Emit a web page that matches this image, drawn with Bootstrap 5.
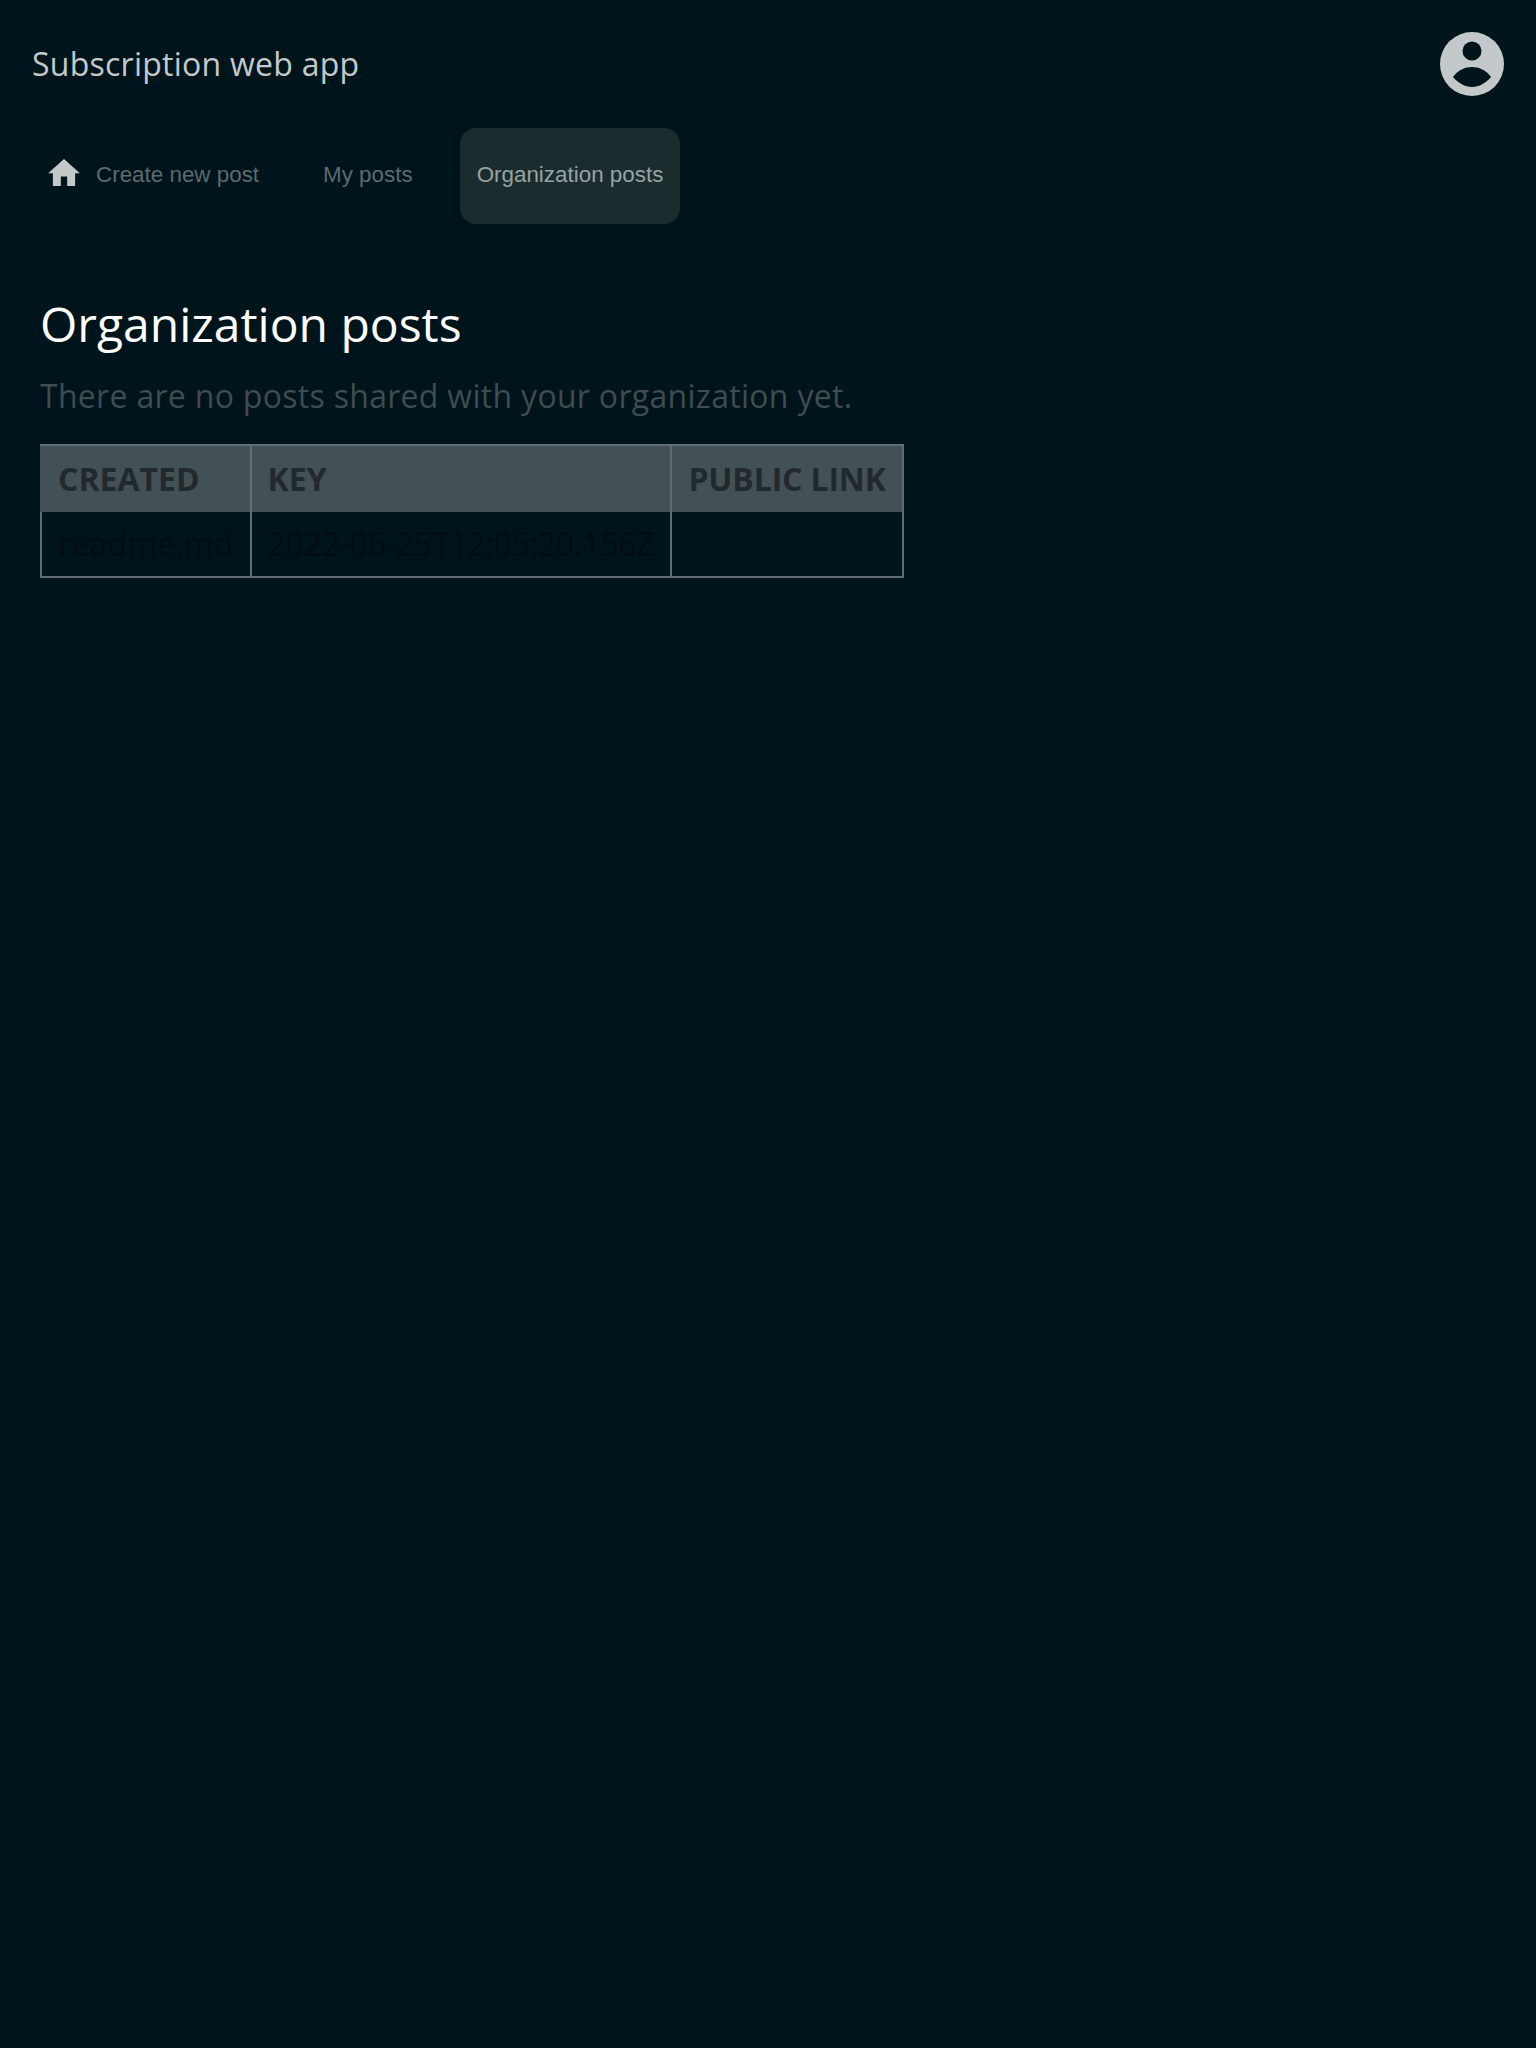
<!DOCTYPE html>
<html lang="en">
<head>
  <meta charset="UTF-8" />
  <meta name="viewport" content="width=device-width, initial-scale=1.0" />
  <title>Organization posts</title>
  <link href="https://cdn.jsdelivr.net/npm/bootstrap@5.3.3/dist/css/bootstrap.min.css" rel="stylesheet">
  <style>
    body { background: #00141b; font-family: "Open Sans", sans-serif; min-height: 2048px; }
    .app-header { height: 128px; padding: 0 32px; }
    .app-title { font-size: 32px; color: #c3c9ca; line-height: 48px; letter-spacing: .25px; }
    .app-avatar { width: 64px; height: 64px; display: block; }
    .app-nav { padding: 0 32px; gap: 32px; }
    .app-link { height: 96px; padding: 0 16px 2px; gap: 16px; border-radius: 16px; font-family: "Liberation Sans", Arial, sans-serif; font-size: 22.4px; color: #5d6a6e; text-decoration: none; }
    .app-link:hover { color: #5d6a6e; }
    .app-link.is-current { background: #1b2c2e; color: #99a3a4; margin-left: -1px; padding: 0 17px 2px; }
    .home-icon { width: 32px; height: 27px; display: block; margin-bottom: 6px; }
    .page-body { padding: 71px 40px 0; }
    .page-title { font-size: 48px; line-height: 58px; color: #fff; font-weight: 400; margin: 0 0 19px; }
    .page-note { font-size: 32px; line-height: 48px; color: #3f4c51; margin: 0 0 24px; letter-spacing: .3px; }
    .posts-table { font-size: 32px; line-height: 48px; }
    .posts-table th, .posts-table td { padding: 8px 16px; border: 2px solid #606e72; }
    .posts-table th { background: #435055; color: #22292c; font-weight: 700; text-transform: uppercase; border-bottom: 0; padding: 9px 16px; }
    .posts-table th:first-child { border-left-color: #435055; }
    .posts-table th:nth-child(3) { letter-spacing: -.15px; }
    .posts-table td { color: #020d12; border-top: 0; }
    .posts-table td:nth-child(1) { letter-spacing: .22px; }
    .posts-table td:nth-child(2) { letter-spacing: -.25px; }
  </style>
</head>
<body>
  <header class="app-header d-flex align-items-center justify-content-between">
    <div class="app-title">Subscription web app</div>
    <svg class="app-avatar" viewBox="0 0 64 64" aria-label="Account">
      <circle cx="32" cy="32" r="32" fill="#c3c9ca"/>
      <circle cx="32" cy="19" r="9.5" fill="#00141b"/>
      <path fill="#00141b" d="M13 45C18 38 25 35 32 35C39 35 46 38 51 45C46 51 39 55 32 55C25 55 18 51 13 45Z"/>
    </svg>
  </header>

  <nav class="app-nav d-flex">
    <a class="app-link d-flex align-items-center" href="#">
      <svg class="home-icon" viewBox="2 3 20 17"><path fill="#c3c9ca" d="M10 20v-6h4v6h5v-8h3L12 3 2 12h3v8z"/></svg>
      Create new post
    </a>
    <a class="app-link d-flex align-items-center" href="#">My posts</a>
    <a class="app-link is-current d-flex align-items-center" href="#">Organization posts</a>
  </nav>

  <main class="page-body">
    <h1 class="page-title">Organization posts</h1>
    <p class="page-note">There are no posts shared with your organization yet.</p>
    <table class="posts-table">
      <thead>
        <tr><th>Created</th><th>Key</th><th>Public link</th></tr>
      </thead>
      <tbody>
        <tr><td>readme.md</td><td>2022-06-25T12:05:20.156Z</td><td></td></tr>
      </tbody>
    </table>
  </main>

  <script src="https://cdn.jsdelivr.net/npm/bootstrap@5.3.3/dist/js/bootstrap.bundle.min.js"></script>
</body>
</html>
